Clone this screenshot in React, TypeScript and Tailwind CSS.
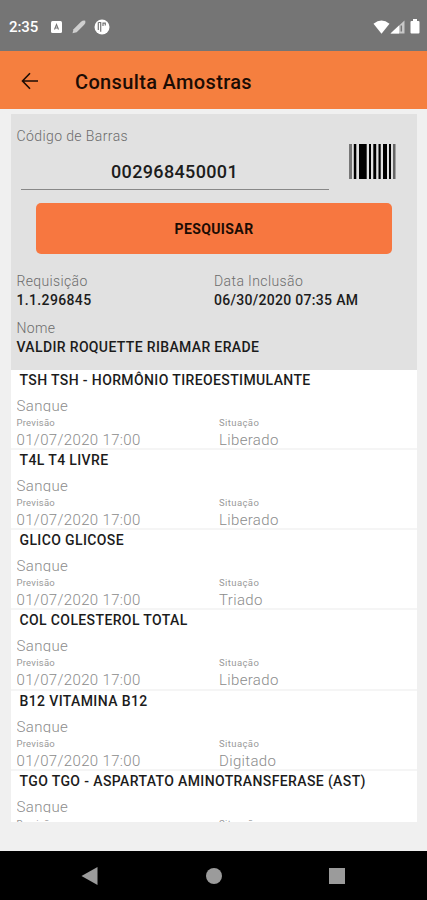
import React from "react";

const exams = [
  { name: "TSH TSH - HORMÔNIO TIREOESTIMULANTE", status: "Liberado" },
  { name: "T4L T4 LIVRE", status: "Liberado" },
  { name: "GLICO GLICOSE", status: "Triado" },
  { name: "COL COLESTEROL TOTAL", status: "Liberado" },
  { name: "B12 VITAMINA B12", status: "Digitado" },
  { name: "TGO TGO - ASPARTATO AMINOTRANSFERASE (AST)", status: "Liberado" },
];

function StatusBar() {
  return (
    <div className="flex h-[51px] shrink-0 items-center bg-[#757575] pt-[2px] pl-[9px] pr-[7px] text-white">
      <span className="w-[42px] text-[15px] leading-5 font-medium tracking-[-0.1px]">2:35</span>
      <svg width="11" height="12" viewBox="0 0 11 12">
        <rect width="11" height="12" rx="1.5" fill="#fff" />
        <path d="M3.500 8.500 5.500 3.500 7.500 8.500M4.300 7h2.400" fill="none" stroke="#777" strokeWidth="1.1" />
      </svg>
      <svg className="ml-[10px]" width="14" height="14" viewBox="0 0 14 14">
        <path d="M.5 13.200 1.500 9.300 9 1.800Q11 0 13.300.7Q14 3 12.200 4.800L4.700 12.200Z" fill="#cfcfcf" />
      </svg>
      <svg className="ml-[8px]" width="16" height="16" viewBox="0 0 16 16">
        <circle cx="8" cy="8" r="7.5" fill="#fff" />
        <path d="M4.300 3.500h2.400v9.300M4.300 3.500v7.500M9 7V4.200h2.300v2.300" fill="none" stroke="#757575" strokeWidth="1.200" />
      </svg>
      <div className="ml-auto flex items-center">
        <svg width="17" height="14" viewBox="0 0 17 14">
          <path d="M.5 3.800Q8.500-2.800 16.500 3.800L8.500 13.700Z" fill="#fff" />
        </svg>
        <svg width="15" height="14" viewBox="0 0 15 14">
          <path d="M14.500.5V13.500H.5Z" fill="#c8c8c8" />
          <path d="M9 5.500V13.500H.5Z" fill="#fff" />
          <path d="M11.300 5.500v6" stroke="#757575" strokeWidth="1.500" />
        </svg>
        <svg className="ml-[5px]" width="10" height="15" viewBox="0 0 10 15">
          <path d="M3 0h4v2h1.500q1 0 1 1v10.500q0 1-1 1h-7q-1 0-1-1V3q0-1 1-1H3Z" fill="#fff" />
        </svg>
      </div>
    </div>
  );
}

function Barcode() {
  return (
    <svg width="48" height="35" viewBox="0 0 48 35">
      <g fill="#000">
        <rect x="0" width="3" height="35" fill="#777" />
        <rect x="4.800" width="2.500" height="35" />
        <rect x="10" width="7.700" height="35" />
        <rect x="20" width="2" height="35" />
        <rect x="24.300" width="2.900" height="35" />
        <rect x="29.500" width="2.200" height="35" />
        <rect x="34" width="4" height="35" />
        <rect x="40" width="2" height="35" />
        <rect x="44" width="2.500" height="35" fill="#666" />
      </g>
    </svg>
  );
}

function Field({ label, value, labelTrack, valueTrack }: { label: string; value: string; labelTrack: string; valueTrack: string }) {
  return (
    <div className="whitespace-nowrap">
      <div className={`text-[14px] leading-[20px] font-light text-[#6c6c6c] ${labelTrack}`}>{label}</div>
      <div className={`text-[14px] leading-[19px] font-medium text-[#1c1c1c] ${valueTrack}`}>{value}</div>
    </div>
  );
}

export default function App() {
  return (
    <div className="flex h-[900px] w-[427px] flex-col overflow-hidden bg-[#f0f0f0] font-['Roboto',sans-serif]">
      <StatusBar />
      <header className="flex h-[58px] shrink-0 items-center bg-[#f57f3f] pt-[2px] pl-[21px] text-[#1c0c04]">
        <svg width="18" height="18" viewBox="0 0 18 18" fill="none" stroke="currentColor" strokeWidth="1.600">
          <path d="M17 9H1.500M9 1.300 1.500 9 9 16.700" />
        </svg>
        <h1 className="ml-[36px] pt-px text-[20px] leading-6 font-medium tracking-[0.35px]">Consulta Amostras</h1>
      </header>

      <main className="mt-[5px] ml-[11px] flex h-[708px] w-[406px] shrink-0 flex-col overflow-hidden">
        <section className="h-[255.500px] shrink-0 bg-[#e1e1e1] px-[5.500px] pt-[12px]">
          <div className="flex h-[64px]">
            <div className="w-[332px]">
              <label className="block h-[20px] text-[14px] leading-[20px] font-light tracking-[0.4px] text-[#6c6c6c]">Código de Barras</label>
              <div className="mt-[8px] ml-[4px] h-[36px] w-[308px] border-b border-[#888] pt-[7px] text-center text-[18px] leading-[22px] font-medium tracking-[0.35px] text-[#1c1c1c]">
                002968450001
              </div>
            </div>
            <div className="pt-[18px]">
              <Barcode />
            </div>
          </div>
          <button className="mt-[13px] ml-[19.500px] flex h-[51px] w-[356px] items-center justify-center rounded-[5px] bg-[#f77740] pt-px text-[14px] font-bold tracking-[0.4px] text-[#1c0c04]">
            PESQUISAR
          </button>
          <div className="mt-[17px] grid grid-cols-[197.500px_1fr]">
            <Field label="Requisição" value="1.1.296845" labelTrack="tracking-[0.35px]" valueTrack="tracking-[0.35px]" />
            <Field label="Data Inclusão" value="06/30/2020 07:35 AM" labelTrack="tracking-[0.4px]" valueTrack="tracking-[0.3px]" />
          </div>
          <div className="mt-[8px]">
            <Field label="Nome" value="VALDIR ROQUETTE RIBAMAR ERADE" labelTrack="tracking-[0.35px]" valueTrack="tracking-[0.35px]" />
          </div>
        </section>

        <section className="min-h-0 flex-1 overflow-hidden bg-white">
          {exams.map((exam) => (
            <article key={exam.name} className="h-[80.250px] border-b-2 border-[#f5f5f5] px-[5.500px] whitespace-nowrap">
              <h2 className="h-[20px] pl-[3px] text-[14px] leading-[20px] font-medium tracking-[0.38px] text-[#1c1c1c]">{exam.name}</h2>
              <p className="mt-[7px] h-[15px] overflow-hidden text-[15px] leading-[18px] font-light tracking-[0.35px] text-[#8c8c8c]">Sangue</p>
              <div className="mt-[5px] grid grid-cols-[202.500px_1fr] text-[#999]">
                <span className="text-[9.500px] leading-[12px] tracking-[0.25px]">Previsão</span>
                <span className="text-[9.500px] leading-[12px] tracking-[0.4px]">Situação</span>
              </div>
              <div className="mt-[2px] grid h-[17px] grid-cols-[202.500px_1fr] overflow-hidden text-[15px] leading-[18px] font-light tracking-[0.35px] text-[#8c8c8c]">
                <span>01/07/2020 17:00</span>
                <span>{exam.status}</span>
              </div>
            </article>
          ))}
        </section>
      </main>

      <nav className="mt-auto flex h-[49px] shrink-0 items-center justify-between bg-black pr-[82px] pl-[81px]">
        <svg width="17" height="18" viewBox="0 0 17 18">
          <path d="M16.500 0v18L.5 9Z" fill="#9b9b9b" />
        </svg>
        <span className="size-[16px] rounded-full bg-[#9b9b9b]" />
        <span className="size-[16px] bg-[#9b9b9b]" />
      </nav>
    </div>
  );
}
